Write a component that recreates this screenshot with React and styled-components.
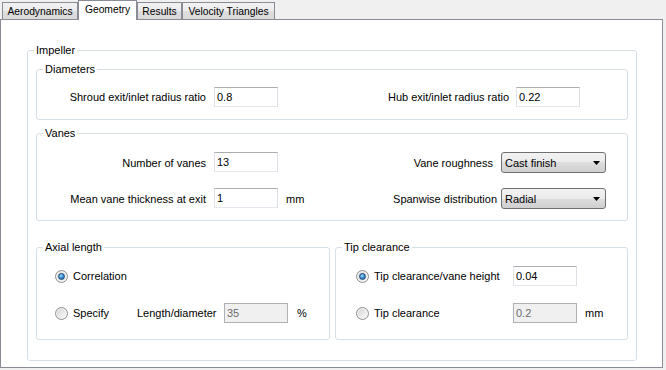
import React from 'react'
import styled, { createGlobalStyle } from 'styled-components'

const GlobalStyle = createGlobalStyle`
  html, body {
    margin: 0;
    padding: 0;
    background: #f0f0f0;
  }
  body {
    font-family: "Liberation Sans", Arial, sans-serif;
    font-size: 11px;
    color: #000;
  }
`

const Window = styled.div`
  width: 666px;
  height: 370px;
  background: #f0f0f0;
  overflow: hidden;
`

const TabStrip = styled.div`
  display: flex;
  align-items: flex-end;
  height: 19px;
  padding-left: 2px;
`

const Tab = styled.div`
  box-sizing: border-box;
  position: relative;
  z-index: ${p => (p.$active ? 1 : 0)};
  width: ${p => p.$width}px;
  height: ${p => (p.$active ? 20 : 17)}px;
  margin-bottom: ${p => (p.$active ? -1 : 0)}px;
  padding-bottom: ${p => (p.$active ? 3 : 0)}px;
  display: flex;
  align-items: center;
  justify-content: center;
  border: 1px solid #898c95;
  border-bottom: none;
  background: ${p =>
    p.$active
      ? '#fff'
      : 'linear-gradient(#f2f2f2 0%, #ebebeb 50%, #dedede 50%, #d9d9d9 100%)'};
  font-size: 10.3px;
  white-space: nowrap;
`

const Panel = styled.div`
  box-sizing: border-box;
  width: 663px;
  height: 349px;
  padding: 24px 25px 6px 26px;
  background: #fff;
  border: 1px solid #898c95;
`

const Group = styled.fieldset`
  margin: ${p => p.$mt || 0}px 0 0;
  padding: 0;
  min-width: 0;
  border: 1px solid #d5dfe5;
  border-radius: 3px;
  ${p => (p.$width ? `width: ${p.$width}px; flex: none; box-sizing: border-box;` : '')}
  ${p => (p.$grow ? 'flex: 1;' : '')}
`

const Caption = styled.legend`
  margin-left: 6px;
  padding: 0 2px;
  font-size: 11px;
  line-height: 13px;
`

const GroupBody = styled.div`
  display: flex;
  flex-direction: column;
  gap: ${p => p.$gap || 0}px;
  padding: ${p => p.$pad};
`

const GroupRow = styled.div`
  display: flex;
  gap: 5px;
  margin-top: 20px;
`

const Row = styled.div`
  display: flex;
  align-items: center;
  height: ${p => p.$h || 20}px;
  padding-left: ${p => p.$pl || 0}px;
  padding-right: ${p => p.$pr || 0}px;
`

const Pair = styled.div`
  display: flex;
  align-items: center;
  align-self: stretch;
  gap: ${p => p.$gap}px;
  margin-left: ${p => (p.$push ? 'auto' : '0')};
`

const Label = styled.span`
  flex: none;
  width: ${p => (p.$w ? `${p.$w}px` : 'auto')};
  text-align: ${p => p.$align || 'left'};
  white-space: nowrap;
`

const Unit = styled.span`
  margin-left: ${p => p.$ml}px;
`

const TextBox = styled.input`
  box-sizing: border-box;
  align-self: flex-start;
  width: 64px;
  height: 20px;
  margin: 0;
  padding: 0 2px;
  border: 1px solid;
  border-color: #abadb3 #dbdfe6 #e3e9ef #e2e3ea;
  background: #fff;
  color: #000;
  font: inherit;
  outline: none;

  &:disabled {
    background: #f0f0f0;
    border-color: #adb2b5;
    color: #6d6d6d;
  }
`

const Combo = styled.div`
  box-sizing: border-box;
  width: 105px;
  height: 21px;
  display: flex;
  align-items: center;
  justify-content: space-between;
  padding: 0 5px 0 3px;
  border: 1px solid #707070;
  border-radius: 3px;
  background: linear-gradient(#f2f2f2 0%, #ebebeb 50%, #dddddd 50%, #cfcfcf 100%);
`

const RadioOption = styled.label`
  flex: none;
  display: flex;
  align-items: center;
  gap: 5px;
  width: ${p => (p.$w ? `${p.$w}px` : 'auto')};
`

const RadioDot = styled.span`
  box-sizing: border-box;
  position: relative;
  width: 13px;
  height: 13px;
  border-radius: 50%;
  border: 1px solid #8e8f8f;
  background: linear-gradient(135deg, #d2d2d2 0%, #e8e8e8 50%, #fafafa 100%);
  box-shadow: inset 0 0 0 1px #f4f4f4;

  ${p =>
    p.$checked &&
    `
    &::after {
      content: '';
      position: absolute;
      left: 2px;
      top: 2px;
      width: 7px;
      height: 7px;
      box-sizing: border-box;
      border-radius: 50%;
      border: 1px solid #1b4f80;
      background: radial-gradient(circle at 40% 35%, #a6dcfb 0%, #3b8ad0 50%, #1a5a96 100%);
    }
  `}
`

const Arrow = () => (
  <svg width="7" height="4" viewBox="0 0 7 4">
    <polygon points="0,0 7,0 3.5,4" fill="#000" />
  </svg>
)

const Radio = ({ checked, width, children }) => (
  <RadioOption $w={width}>
    <RadioDot $checked={checked} />
    {children}
  </RadioOption>
)

const tabs = [
  { name: 'Aerodynamics', width: 76 },
  { name: 'Geometry', width: 59, active: true },
  { name: 'Results', width: 45 },
  { name: 'Velocity Triangles', width: 93 },
]

const App = () => (
  <Window>
    <GlobalStyle />
    <TabStrip>
      {tabs.map(t => (
        <Tab key={t.name} $width={t.width} $active={t.active}>
          {t.name}
        </Tab>
      ))}
    </TabStrip>
    <Panel>
      <Group>
        <Caption>Impeller</Caption>
        <GroupBody $pad="6px 8px 20px">
          <Group>
            <Caption>Diameters</Caption>
            <GroupBody $pad="11px 0 12px">
              <Row $pr={47}>
                <Pair $gap={8}>
                  <Label $w={169} $align="right">Shroud exit/inlet radius ratio</Label>
                  <TextBox defaultValue="0.8" />
                </Pair>
                <Pair $gap={7} $push>
                  <Label>Hub exit/inlet radius ratio</Label>
                  <TextBox defaultValue="0.22" />
                </Pair>
              </Row>
            </GroupBody>
          </Group>

          <Group $mt={7}>
            <Caption>Vanes</Caption>
            <GroupBody $pad="12px 0 11px" $gap={15}>
              <Row $h={21} $pr={21}>
                <Pair $gap={8}>
                  <Label $w={169} $align="right">Number of vanes</Label>
                  <TextBox defaultValue="13" />
                </Pair>
                <Pair $gap={8} $push>
                  <Label>Vane roughness</Label>
                  <Combo>Cast finish<Arrow /></Combo>
                </Pair>
              </Row>
              <Row $h={21} $pr={21}>
                <Pair $gap={8}>
                  <Label $w={169} $align="right">Mean vane thickness at exit</Label>
                  <TextBox defaultValue="1" />
                </Pair>
                <Unit $ml={8}>mm</Unit>
                <Pair $gap={4} $push>
                  <Label>Spanwise distribution</Label>
                  <Combo>Radial<Arrow /></Combo>
                </Pair>
              </Row>
            </GroupBody>
          </Group>

          <GroupRow>
            <Group $width={294}>
              <Caption>Axial length</Caption>
              <GroupBody $pad="12px 0 16px" $gap={17}>
                <Row $pl={18}>
                  <Radio checked>Correlation</Radio>
                </Row>
                <Row $pl={18}>
                  <Radio width={82}>Specify</Radio>
                  <Label $w={87}>Length/diameter</Label>
                  <TextBox defaultValue="35" disabled />
                  <Unit $ml={9}>%</Unit>
                </Row>
              </GroupBody>
            </Group>

            <Group $grow>
              <Caption>Tip clearance</Caption>
              <GroupBody $pad="12px 0 16px" $gap={17}>
                <Row $pl={20}>
                  <Radio checked width={157}>Tip clearance/vane height</Radio>
                  <TextBox defaultValue="0.04" />
                </Row>
                <Row $pl={20}>
                  <Radio width={157}>Tip clearance</Radio>
                  <TextBox defaultValue="0.2" disabled />
                  <Unit $ml={8}>mm</Unit>
                </Row>
              </GroupBody>
            </Group>
          </GroupRow>
        </GroupBody>
      </Group>
    </Panel>
  </Window>
)

export default App
